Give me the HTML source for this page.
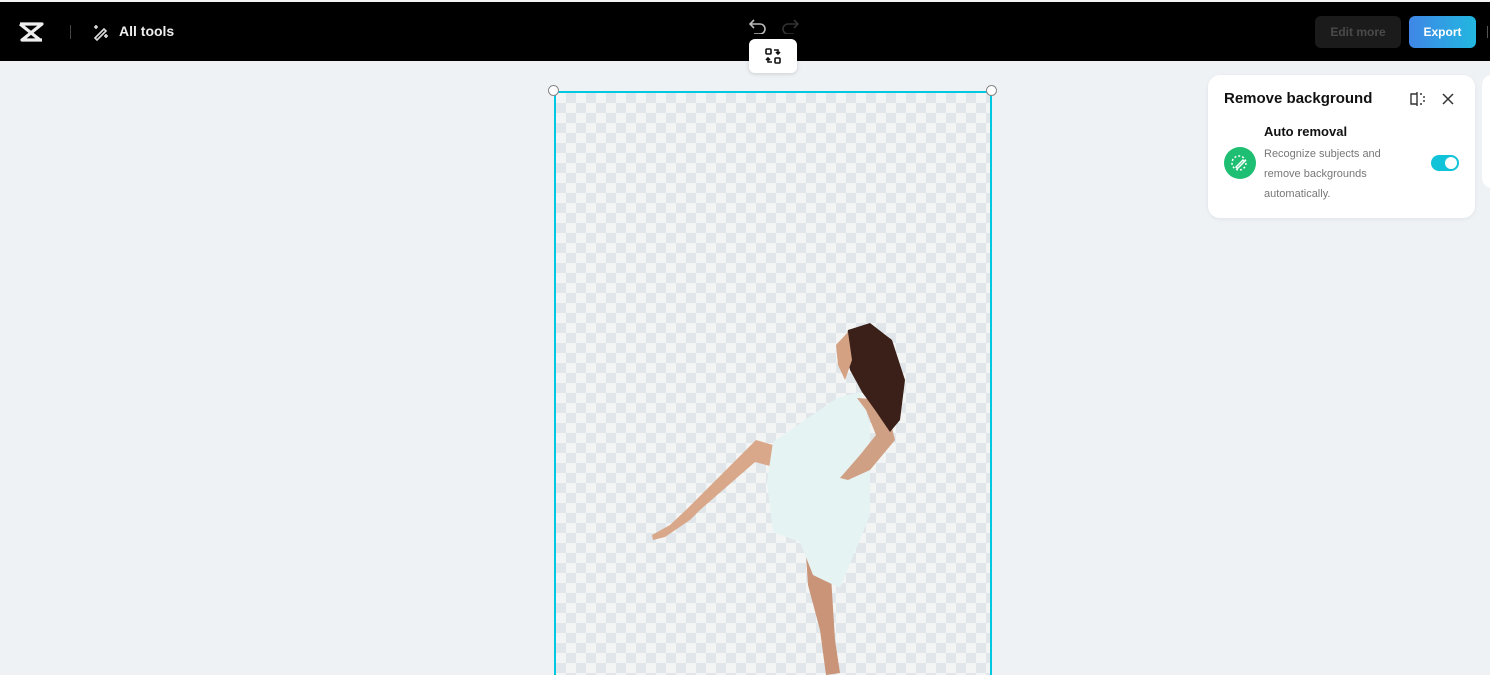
<!DOCTYPE html>
<html><head><style>
*{margin:0;padding:0;box-sizing:border-box}
html,body{width:1490px;height:675px;overflow:hidden}
body{background:#eef2f5;font-family:"Liberation Sans",sans-serif;position:relative}
.hdr{position:absolute;left:0;top:2px;width:1490px;height:59px;background:#000}
.top{position:absolute;left:0;top:0;width:1490px;height:2px;background:#f4f4f4}
.canvas{position:absolute;left:554px;top:91px;width:438px;height:587px;border:2px solid #00c8e0;overflow:hidden;
background-color:#f3f5f5;background-image:linear-gradient(45deg,#e0e6e9 25%,transparent 25%,transparent 75%,#e0e6e9 75%),linear-gradient(45deg,#e0e6e9 25%,transparent 25%,transparent 75%,#e0e6e9 75%);background-size:20px 20px;background-position:0 0,10px 10px}
.h{position:absolute;width:11px;height:11px;border-radius:50%;background:#fff;border:1px solid #888}
.panel{position:absolute;left:1208px;top:75px;width:267px;height:143px;background:#fff;border-radius:12px;box-shadow:0 1px 4px rgba(0,0,0,.06)}
</style></head><body>
<div class="top"></div>
<div class="hdr">
<svg style="position:absolute;left:18px;top:19px" width="27" height="22" viewBox="0 0 27 22"><path d="M2 3h22L4 19h20M2 3l20 16" stroke="#eee" stroke-width="3.2" fill="none" stroke-linejoin="round"/></svg>
<div style="position:absolute;left:70px;top:23px;width:1px;height:14px;background:#444"></div>
<svg style="position:absolute;left:92px;top:21px" width="18" height="18" viewBox="0 0 18 18" fill="none" stroke="#ddd" stroke-width="1.6"><path d="M3 15l9-9 2 2-9 9z"/><path d="M4 2v4M2 4h4M14 11v4M12 13h4"/></svg>
<div style="position:absolute;left:119px;top:21px;color:#eee;font-size:14px;font-weight:bold">All tools</div>
<svg style="position:absolute;left:748px;top:16px" width="20" height="16" viewBox="0 0 20 16" fill="none" stroke="#bbb" stroke-width="1.6"><path d="M6 2L2 6l4 4M2 6h10a5 5 0 010 10H6"/></svg>
<svg style="position:absolute;left:780px;top:16px" width="20" height="16" viewBox="0 0 20 16" fill="none" stroke="#333" stroke-width="1.6"><path d="M14 2l4 4-4 4M18 6H8a5 5 0 000 10h6"/></svg>
<div style="position:absolute;left:1315px;top:14px;width:86px;height:32px;background:#1b1b1b;border-radius:6px;color:#4a4a4a;font-size:12px;font-weight:bold;text-align:center;line-height:32px">Edit more</div>
<div style="position:absolute;left:1409px;top:14px;width:67px;height:32px;background:linear-gradient(90deg,#3f86e6,#22b7e0);border-radius:6px;color:#fff;font-size:12px;font-weight:bold;text-align:center;line-height:32px">Export</div>
<div style="position:absolute;left:1487px;top:24px;width:1px;height:12px;background:#555"></div>
</div>
<div style="position:absolute;left:749px;top:39px;width:48px;height:34px;background:#fff;border-radius:6px;box-shadow:0 1px 4px rgba(0,0,0,.15)">
<svg style="position:absolute;left:16px;top:9px" width="16" height="16" viewBox="0 0 16 16" fill="none" stroke="#111" stroke-width="1.6"><rect x="1" y="1" width="5" height="5" rx="1"/><rect x="10" y="10" width="5" height="5" rx="1"/><path d="M9 2h4v4M11 4l2 2 2-2M7 14H3v-4M1 12l2-2 2 2"/></svg>
</div>
<div class="canvas">
<svg style="position:absolute;left:-2px;top:-2px" width="438" height="600" viewBox="554 91 438 600">
<path d="M756 440 L790 450 L785 470 L755 462 L700 510 L690 520 L665 537 L653 540 L652 535 L670 525 L688 508 Z" fill="#d9a88a"/>
<path d="M805 540 L830 560 L835 640 L840 673 L826 675 L820 630 L808 585 Z" fill="#c99478"/>
<path d="M773 442 L837 398 L860 392 L870 425 L870 515 L840 588 L813 575 L800 542 L773 532 L767 482 Z" fill="#e6f3f3"/>
<path d="M857 398 L885 400 L895 440 L870 470 L848 480 L840 478 L860 455 L876 435 L866 410 Z" fill="#d0a085"/>
<path d="M848 330 L870 323 L892 340 L905 380 L900 420 L890 432 L875 410 L862 392 L850 370 L845 345 Z" fill="#3a2018"/>
<path d="M836 345 L848 332 L852 360 L845 380 L838 365 Z" fill="#d4a283"/>
</svg>
</div>
<div class="h" style="left:548px;top:85px"></div>
<div class="h" style="left:986px;top:85px"></div>
<div class="panel">
<div style="position:absolute;left:16px;top:15px;font-size:15px;font-weight:bold;color:#111">Remove background</div>
<svg style="position:absolute;left:201px;top:16px" width="18" height="16" viewBox="0 0 18 16" fill="none" stroke="#333" stroke-width="1.4"><path d="M8 1v14M8 3H2v10h6M11 3h2M15 5v2M15 9v2M11 13h2"/></svg>
<svg style="position:absolute;left:234px;top:18px" width="12" height="12" viewBox="0 0 12 12" stroke="#333" stroke-width="1.5"><path d="M1 1l10 10M11 1L1 11"/></svg>
<div style="position:absolute;left:16px;top:72px;width:32px;height:32px;border-radius:50%;background:#1fbf73">
<svg style="position:absolute;left:7px;top:7px" width="18" height="18" viewBox="0 0 18 18" fill="none" stroke="#fff" stroke-width="1.5"><circle cx="8" cy="9" r="7" stroke-dasharray="2 2"/><path d="M5 13l7-7 1.5 1.5-7 7z"/></svg></div>
<div style="position:absolute;left:56px;top:49px;font-size:13px;font-weight:bold;color:#111">Auto removal</div>
<div style="position:absolute;left:56px;top:69px;width:150px;font-size:11px;line-height:20px;color:#777">Recognize subjects and remove backgrounds automatically.</div>
<div style="position:absolute;left:223px;top:80px;width:28px;height:16px;border-radius:8px;background:#10c3d8"><div style="position:absolute;right:2px;top:2px;width:12px;height:12px;border-radius:50%;background:#fff"></div></div>
</div>
<div style="position:absolute;left:1482px;top:75px;width:20px;height:113px;background:#fff;border-radius:10px"></div>
</body></html>
